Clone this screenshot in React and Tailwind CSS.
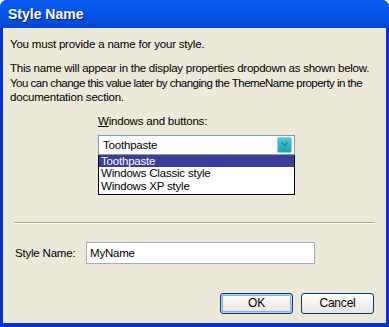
const font = { fontFamily: '"Liberation Sans", Arial, sans-serif' };

function ComboArrow() {
  return (
    <div className="flex h-[16px] w-[15px] items-center justify-center rounded-[2px] border border-[#7fd6e2] bg-gradient-to-b from-[#4fc6d8] to-[#1aa2bb]">
      <svg width="7" height="5" viewBox="0 0 7 5">
        <path d="M0.5 0.5 L3.5 3.5 L6.5 0.5" fill="none" stroke="#2a7f93" strokeWidth="1.3" />
      </svg>
    </div>
  );
}

function XpButton({ label, primary }) {
  return (
    <button
      className={`flex h-[21px] w-[73px] items-center justify-center rounded-[3px] border border-[#003c74] bg-gradient-to-b from-white to-[#e6e5de] text-[12px] text-black ${
        primary ? "shadow-[inset_0_0_0_1px_#bcd3f6,inset_0_0_0_2px_#89adf0]" : ""
      }`}
    >
      {label}
    </button>
  );
}

export default function App() {
  return (
    <div
      className="flex h-[327px] w-[389px] flex-col overflow-hidden rounded-t-[7px] bg-[#0831d9] text-black"
      style={font}
    >
      <div className="flex h-[28px] shrink-0 items-center bg-gradient-to-b from-[#0a5cf0] via-[#0554e6] to-[#0246d4] pl-[8px]">
        <span className="text-[14px] font-bold text-white [text-shadow:1px_1px_0_#0a1e6e]">Style Name</span>
      </div>
      <div className="mx-[3px] mb-[4px] flex flex-1 flex-col whitespace-nowrap bg-[#ece9d8] px-[7px] text-[11.5px] leading-[14px] tracking-[-0.2px]">
        <p className="mt-[9px]">You must provide a name for your style.</p>
        <p className="mt-[10px] leading-[14.5px]">
          <span className="tracking-[-0.26px]">This name will appear in the display properties dropdown as shown below.</span>
          <br />
          <span className="tracking-[-0.52px]">You can change this value later by changing the ThemeName property in the</span>
          <br />
          documentation section.
        </p>

        <div className="ml-[88px] mt-[9px] w-[197px]">
          <div>
            <span className="underline">W</span>indows and buttons:
          </div>
          <div className="mt-[7px] flex h-[20px] items-center justify-between border border-[#7f9db9] bg-white pl-[4px] pr-[2px]">
            <span>Toothpaste</span>
            <ComboArrow />
          </div>
          <div className="flex h-[40px] flex-col border border-t-0 border-black bg-white leading-[12.5px]">
            <div className="bg-[#3b3d9c] pl-[2px] text-white">Toothpaste</div>
            <div className="pl-[2px]">Windows Classic style</div>
            <div className="pl-[2px]">Windows XP style</div>
          </div>
        </div>

        <div className="mx-[4px] mt-[27px] border-t border-b border-t-[#aca899] border-b-white" />

        <div className="mt-[18px] flex items-center">
          <span className="ml-[5px] w-[71px]">Style Name:</span>
          <div className="flex h-[22px] w-[229px] items-center border border-[#a5acb5] bg-white pl-[3px]">
            MyName
          </div>
        </div>

        <div className="mt-[29px] flex justify-end gap-[8px] pr-[5px]">
          <XpButton label="OK" primary />
          <XpButton label="Cancel" />
        </div>
      </div>
    </div>
  );
}
